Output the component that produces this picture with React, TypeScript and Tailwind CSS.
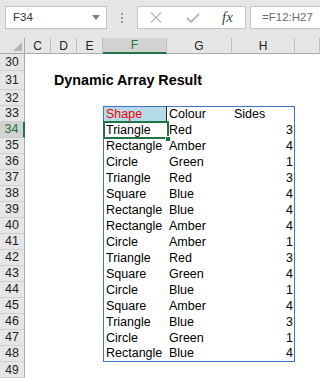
import React from 'react';

type Item = { shape: string; colour: string; sides: number };

const items: Item[] = [
  { shape: 'Triangle', colour: 'Red', sides: 3 },
  { shape: 'Rectangle', colour: 'Amber', sides: 4 },
  { shape: 'Circle', colour: 'Green', sides: 1 },
  { shape: 'Triangle', colour: 'Red', sides: 3 },
  { shape: 'Square', colour: 'Blue', sides: 4 },
  { shape: 'Rectangle', colour: 'Blue', sides: 4 },
  { shape: 'Rectangle', colour: 'Amber', sides: 4 },
  { shape: 'Circle', colour: 'Amber', sides: 1 },
  { shape: 'Triangle', colour: 'Red', sides: 3 },
  { shape: 'Square', colour: 'Green', sides: 4 },
  { shape: 'Circle', colour: 'Blue', sides: 1 },
  { shape: 'Square', colour: 'Amber', sides: 4 },
  { shape: 'Triangle', colour: 'Blue', sides: 3 },
  { shape: 'Circle', colour: 'Green', sides: 1 },
  { shape: 'Rectangle', colour: 'Blue', sides: 4 },
];

function RowHead({ n, active }: { n: number; active?: boolean }) {
  return (
    <div
      className={
        active
          ? 'w-[25px] h-full flex items-center justify-center bg-[#d2d2d2] text-[#217346] border-r-2 border-r-[#217346] border-b border-b-[#c8c8c8]'
          : 'w-[25px] h-full flex items-center justify-center bg-[#e6e6e6] text-[#222] border-r border-r-[#ababab] border-b border-b-[#d0d0d0]'
      }
    >
      {n}
    </div>
  );
}

function FormulaBar() {
  return (
    <div className="h-[38px] bg-[#e6e6e6] flex items-start pt-[6px] text-[11.5px]">
      <div className="ml-[5px] w-[102px] h-[23px] bg-white border border-[#c6c6c6] flex items-center pl-[7px] pr-[6px] text-[#333]">
        <span>F34</span>
        <svg className="ml-auto" width="8" height="5" viewBox="0 0 8 5">
          <path d="M0 0 L8 0 L4 5 Z" fill="#808080" />
        </svg>
      </div>
      <div className="w-[30px] h-[23px] flex flex-col items-center justify-center gap-[2px]">
        <span className="w-[2px] h-[2px] bg-[#9a9a9a]" />
        <span className="w-[2px] h-[2px] bg-[#9a9a9a]" />
        <span className="w-[2px] h-[2px] bg-[#9a9a9a]" />
      </div>
      <div className="w-[109px] h-[23px] bg-white border border-[#c6c6c6] flex items-center">
        <svg className="ml-[12px]" width="12" height="11" viewBox="0 0 12 11">
          <path d="M1 0.5 L11 10.5 M11 0.5 L1 10.5" stroke="#b8b8b8" strokeWidth="1.2" />
        </svg>
        <svg className="ml-[24px]" width="14" height="10" viewBox="0 0 14 10">
          <path d="M1 5 L5 9 L13 1" stroke="#b8b8b8" strokeWidth="2" fill="none" />
        </svg>
        <span className="ml-[22px] font-['Liberation_Serif',serif] italic text-[15px] text-[#444] leading-none">
          fx
        </span>
      </div>
      <div className="ml-[4px] flex-1 h-[23px] bg-white border border-r-0 border-[#c6c6c6] flex items-center pl-[11px] text-[#6e6e6e]">
        =F12:H27
      </div>
    </div>
  );
}

function ColumnHeaders() {
  const head = 'h-full flex items-center justify-center border-r border-r-[#c0c0c0] border-b border-b-[#ababab]';
  return (
    <div className="h-[16px] flex bg-[#e6e6e6] text-[12px] text-[#222]">
      <div className="w-[25px] h-full flex items-end justify-end pr-[2px] pb-[2px] border-r border-r-[#ababab] border-b border-b-[#ababab]">
        <svg width="9" height="9" viewBox="0 0 9 9">
          <path d="M9 0 L9 9 L0 9 Z" fill="#b5b5b5" />
        </svg>
      </div>
      <div className={`w-[26px] ${head}`}>C</div>
      <div className={`w-[26px] ${head}`}>D</div>
      <div className={`w-[26px] ${head}`}>E</div>
      <div className="w-[64px] h-full flex items-center justify-center bg-[#d2d2d2] text-[#217346] border-r border-r-[#c0c0c0] border-b-2 border-b-[#217346]">
        F
      </div>
      <div className={`w-[65px] ${head}`}>G</div>
      <div className={`w-[63px] ${head}`}>H</div>
      <div className={`flex-1 ${head}`}></div>
    </div>
  );
}

function Blank() {
  return (
    <>
      <div className="w-[26px]" />
      <div className="w-[26px]" />
      <div className="w-[26px]" />
    </>
  );
}

export default function App() {
  const blue = 'border-[#4472c4]';
  return (
    <div className="w-[320px] h-[378px] overflow-hidden bg-white font-['Liberation_Sans',Arial,sans-serif] text-black">
      <FormulaBar />
      <ColumnHeaders />

      <div className="text-[12px]">
        <div className="h-[17px] flex">
          <RowHead n={30} />
        </div>
        <div className="h-[19px] flex">
          <RowHead n={31} />
          <div className="w-[26px]" />
          <div className="pl-[3px] flex items-center text-[14.3px] font-bold whitespace-nowrap">
            Dynamic Array Result
          </div>
        </div>
        <div className="h-[16px] flex">
          <RowHead n={32} />
        </div>

        {/* table header */}
        <div className="h-[16px] flex text-[12.5px]">
          <RowHead n={33} />
          <Blank />
          <div className={`w-[64px] h-full flex items-center pl-[2px] bg-[#b4dbe9] text-[#ff0000] border-l border-t ${blue} border-r border-r-[#222]`}>
            Shape
          </div>
          <div className={`w-[65px] h-full flex items-center pl-[2px] border-t ${blue}`}>Colour</div>
          <div className={`w-[63px] h-full flex items-center pl-[2px] border-t border-r ${blue}`}>Sides</div>
        </div>

        {items.map((it, i) => {
          const last = i === items.length - 1;
          const active = i === 0;
          return (
            <div key={i} className="h-[16px] flex text-[12.5px]">
              <RowHead n={34 + i} active={active} />
              <Blank />
              <div className={`relative w-[64px] h-full flex items-center pl-[2px] border-l ${blue} ${last ? `border-b ${blue}` : ''}`}>
                {it.shape}
                {active && (
                  <>
                    <div className="absolute -left-[1px] -top-[1px] w-[66px] h-[18px] border-2 border-[#217346]" />
                    <div className="absolute -right-[4px] -bottom-[4px] w-[6px] h-[6px] bg-[#217346] border border-white" />
                  </>
                )}
              </div>
              <div className={`w-[65px] h-full flex items-center pl-[2px] ${last ? `border-b ${blue}` : ''}`}>
                {it.colour}
              </div>
              <div className={`w-[63px] h-full flex items-center justify-end pr-[1px] border-r ${blue} ${last ? `border-b ${blue}` : ''}`}>
                {it.sides}
              </div>
            </div>
          );
        })}

        <div className="h-[16px] flex">
          <RowHead n={49} />
        </div>
      </div>
    </div>
  );
}
